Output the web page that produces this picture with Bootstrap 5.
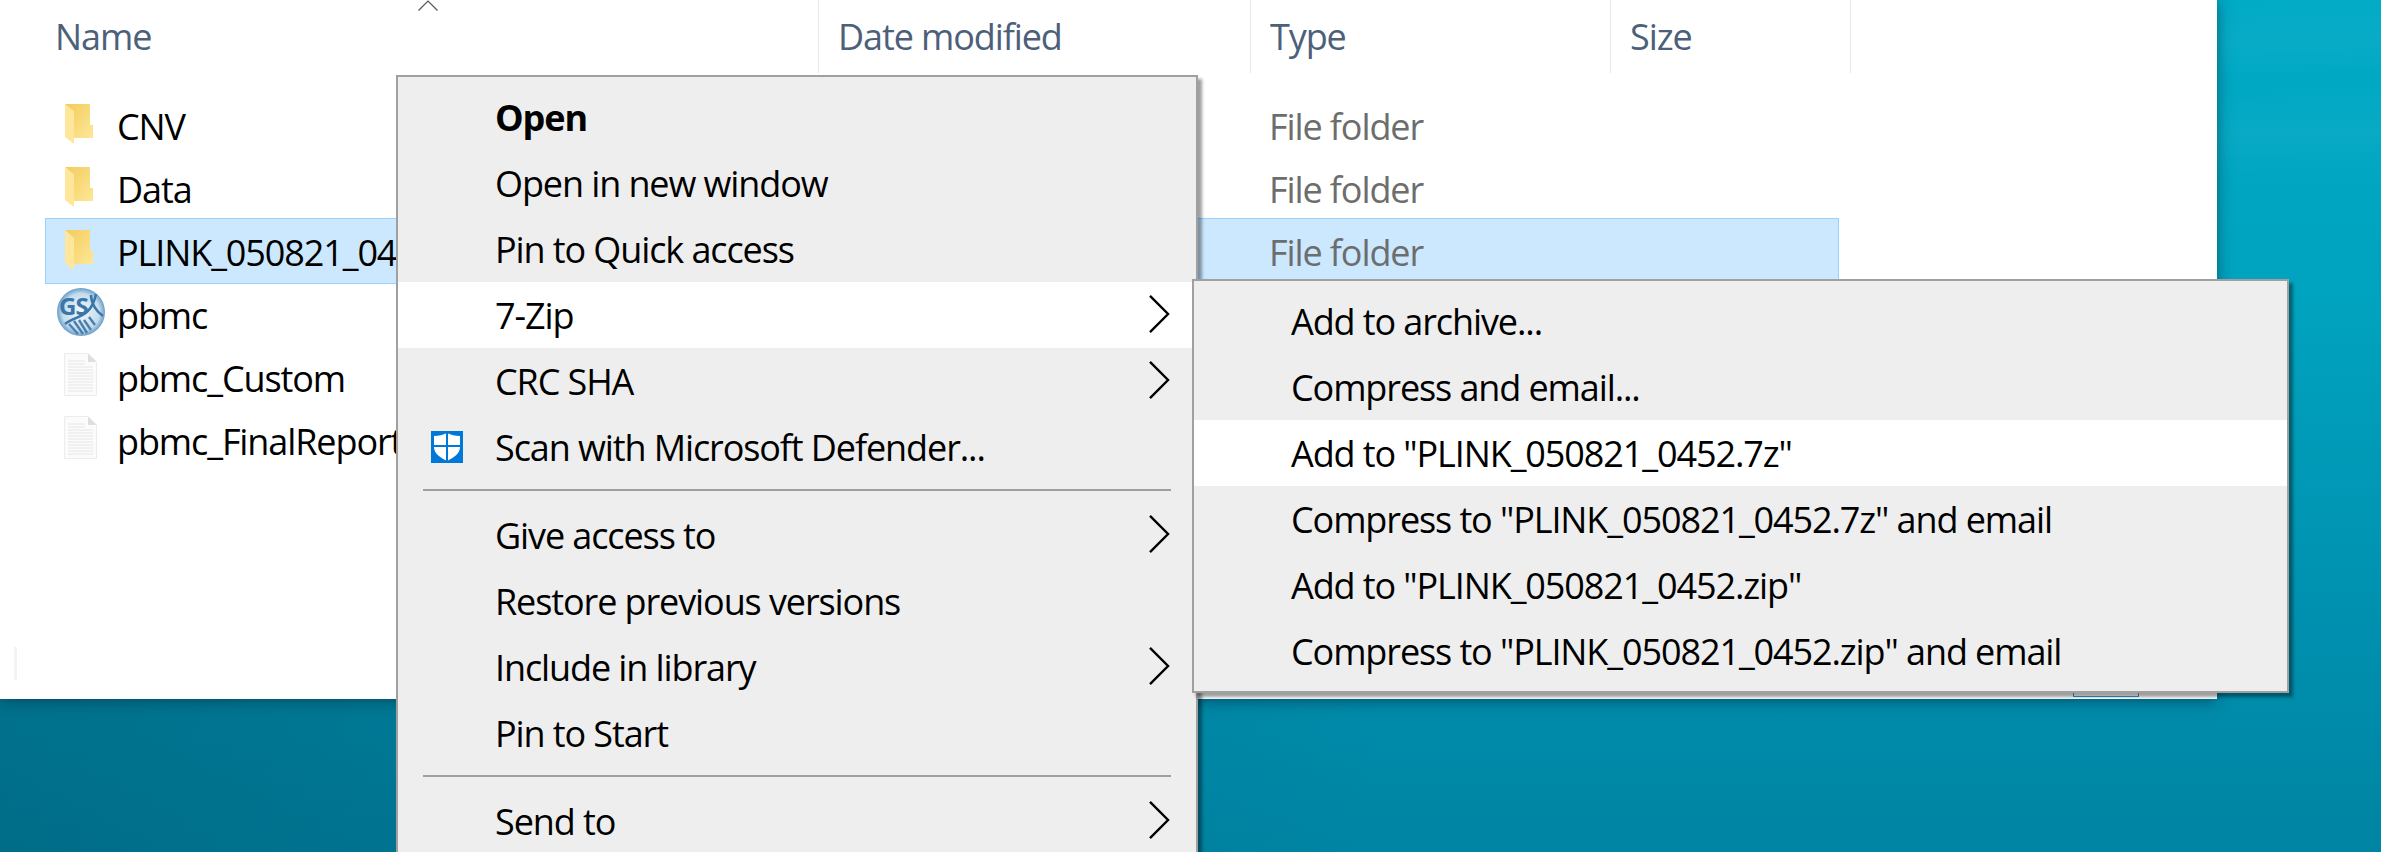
<!DOCTYPE html>
<html lang="en">

<head>
    <meta charset="UTF-8">
    <meta name="viewport" content="width=device-width, initial-scale=1.0">
    <title>Explorer context menu</title>
    <link href="https://cdn.jsdelivr.net/npm/bootstrap@5.3.3/dist/css/bootstrap.min.css" rel="stylesheet">
    <style>
        html, body {
            height: 852px;
            overflow: hidden;
        }

        body {
            position: relative;
            font-family: "Open Sans", "Liberation Sans", sans-serif;
            font-size: 36px;
            letter-spacing: -1.1px;
            color: #000;
            background:
                linear-gradient(178deg, rgba(255, 255, 255, 0) 0, rgba(255, 255, 255, .04) 40px, rgba(255, 255, 255, 0) 75px, rgba(255, 255, 255, .03) 120px, rgba(255, 255, 255, 0) 160px, rgba(255, 255, 255, .03) 215px, rgba(255, 255, 255, 0) 260px) no-repeat,
                linear-gradient(100deg, rgba(0, 50, 70, .32) 0%, rgba(0, 50, 70, 0) 60%),
                linear-gradient(180deg, #00aac6 0%, #00a3bf 35%, #008fae 75%, #0084a3 100%);
        }

        .explorer {
            position: absolute;
            left: 0;
            top: 0;
            width: 2217px;
            height: 699px;
            background: #fff;
            box-shadow: 0 2px 14px rgba(0, 40, 60, .55);
        }

        .col-head {
            height: 73px;
            padding-left: 19px;
            padding-bottom: 2px;
            border-right: 1px solid #e8e8e8;
            color: #4c607a;
            line-height: 73px;
        }

        .col-name { width: 819px; padding-left: 55px; }
        .col-date { width: 432px; }
        .col-type { width: 360px; }
        .col-size { width: 240px; }

        .sort-caret {
            position: absolute;
            left: 418px;
            top: 0;
        }

        .file-list {
            margin-top: 19px;
            margin-left: 45px;
            width: 1794px;
        }

        .file-row {
            height: 66px;
            margin-bottom: -3px;
            border: 1px solid transparent;
        }

        .file-row.picked {
            background: #cce8ff;
            border-color: #99d1ff;
        }

        .file-icon {
            flex: none;
            margin: 6px 12px 0 11px;
        }

        .file-name {
            width: 1152px;
            line-height: 66px;
            padding-top: 1px;
            white-space: nowrap;
            overflow: hidden;
        }

        .file-type {
            line-height: 66px;
            padding-top: 1px;
            color: #6d6d6d;
        }

        .scroll-mark {
            position: absolute;
            left: 14px;
            top: 647px;
            width: 3px;
            height: 33px;
            background: #f3f3f3;
        }

        .view-btn {
            position: absolute;
            left: 2073px;
            top: 660px;
            width: 66px;
            height: 37px;
            border: 1px solid #3a96dd;
        }

        .ctx-menu {
            --bs-dropdown-font-size: 36px;
            position: absolute;
            display: block;
            margin: 0;
            padding: 7px 0;
            background: #eeeeee;
            border: 2px solid #a0a0a0;
            border-radius: 0;
            box-shadow: 4px 4px 3px rgba(0, 0, 0, .38);
            letter-spacing: -1.1px;
        }

        .ctx-main {
            left: 396px;
            top: 75px;
            width: 802px;
        }

        .ctx-sub {
            left: 1192px;
            top: 279px;
            width: 1097px;
            height: 414px;
        }

        .ctx-item {
            height: 66px;
            padding: 0;
            line-height: 67px;
            color: #000;
            background: transparent;
        }

        .ctx-main .ctx-item { padding-left: 97px; }
        .ctx-sub .ctx-item { padding-left: 97px; }

        .ctx-item.lit { background: #fff; }

        .ctx-item.strong {
            font-weight: 700;
        }

        .ctx-rule {
            height: 2px;
            margin: 9px 25px 11px 25px;
            background: #a0a0a0;
            border: 0;
            opacity: 1;
        }

        .ctx-arrow {
            position: absolute;
            right: 26px;
            margin-top: 13px;
        }

        .ctx-shield {
            position: absolute;
            left: 33px;
            margin-top: 17px;
        }
    </style>
</head>

<body>
    <svg width="0" height="0" class="position-absolute">
        <defs>
            <linearGradient id="folderBack" x1="0" y1="0" x2="1" y2="1">
                <stop offset="0" stop-color="#f3cc5c" />
                <stop offset="1" stop-color="#fde797" />
            </linearGradient>
            <radialGradient id="gsBall" cx="0.5" cy="0.5" r="0.55">
                <stop offset="0" stop-color="#f2f7fb" />
                <stop offset="0.7" stop-color="#c5dcec" />
                <stop offset="1" stop-color="#3f82b8" />
            </radialGradient>
            <symbol id="folder" viewBox="0 0 48 48">
                <path d="M8 5H33V26H36V39H17V13Z" fill="url(#folderBack)" />
                <path d="M8 5L17 13V45L8 38Z" fill="#fee69a" />
            </symbol>
            <symbol id="doc" viewBox="0 0 48 48">
                <path d="M7.5 2.500H31L39.500 11V44.500H7.500Z" fill="#fbfbfb" stroke="#ececec" />
                <path d="M31 2.500V11H39.500Z" fill="#dedede" />
                <path d="M11 10H28M11 13H28M11 16H36M11 19H36M11 22H36M11 25H36M11 28H36M11 31H36M11 34H36M11 37H36M11 40H36" stroke="#e6e6e6" />
            </symbol>
            <symbol id="chevron" viewBox="0 0 22 40">
                <path d="M1 1L20 20L1 39" fill="none" stroke="#000" stroke-width="2.500" />
            </symbol>
        </defs>
    </svg>

    <div class="explorer">
        <div class="d-flex">
            <div class="col-head col-name">Name</div>
            <div class="col-head col-date">Date modified</div>
            <div class="col-head col-type">Type</div>
            <div class="col-head col-size">Size</div>
        </div>
        <svg class="sort-caret" width="20" height="11" viewBox="0 0 20 11">
            <path d="M0.500 10.500L10 1L19.500 10.500" fill="none" stroke="#555" stroke-width="1.200" />
        </svg>

        <div class="file-list">
            <div class="file-row d-flex">
                <svg class="file-icon" width="48" height="48"><use href="#folder" /></svg>
                <div class="file-name">CNV</div>
                <div class="file-type">File folder</div>
            </div>
            <div class="file-row d-flex">
                <svg class="file-icon" width="48" height="48"><use href="#folder" /></svg>
                <div class="file-name">Data</div>
                <div class="file-type">File folder</div>
            </div>
            <div class="file-row picked d-flex">
                <svg class="file-icon" width="48" height="48"><use href="#folder" /></svg>
                <div class="file-name">PLINK_050821_0452</div>
                <div class="file-type">File folder</div>
            </div>
            <div class="file-row d-flex">
                <svg class="file-icon" width="48" height="48" viewBox="0 0 48 48">
                    <circle cx="24" cy="24" r="24" fill="url(#gsBall)" />
                    <text x="2" y="27" font-family="Open Sans, sans-serif" font-weight="700" font-size="24" letter-spacing="-1" fill="#3b76ab">GS</text>
                    <path d="M8 36C20 27 34 30 39 6M34 7C34 16 40 24 46 28" fill="none" stroke="#3b76ab" stroke-width="2.500" />
                    <path d="M12 36L21 46M17 33L26 46M22 32L30 45M27 32L34 42M32 29L38 37" stroke="#4a7fae" stroke-width="2.400" />
                </svg>
                <div class="file-name">pbmc</div>
            </div>
            <div class="file-row d-flex">
                <svg class="file-icon" width="48" height="48"><use href="#doc" /></svg>
                <div class="file-name">pbmc_Custom</div>
            </div>
            <div class="file-row d-flex">
                <svg class="file-icon" width="48" height="48"><use href="#doc" /></svg>
                <div class="file-name">pbmc_FinalReport</div>
            </div>
        </div>

        <div class="scroll-mark"></div>
        <div class="view-btn"></div>
    </div>

    <div class="dropdown-menu ctx-menu ctx-main">
        <div class="dropdown-item ctx-item strong">Open</div>
        <div class="dropdown-item ctx-item">Open in new window</div>
        <div class="dropdown-item ctx-item">Pin to Quick access</div>
        <div class="dropdown-item ctx-item lit">
            <svg class="ctx-arrow" width="21" height="38"><use href="#chevron" /></svg>7-Zip
        </div>
        <div class="dropdown-item ctx-item">
            <svg class="ctx-arrow" width="21" height="38"><use href="#chevron" /></svg>CRC SHA
        </div>
        <div class="dropdown-item ctx-item">
            <svg class="ctx-shield" width="32" height="32" viewBox="0 0 32 32">
                <rect width="32" height="32" fill="#0078d7" />
                <path d="M3 5C8 5 12 4 16 2C20 4 24 5 29 5V16C29 23 22 27 16 30C10 27 3 23 3 16Z" fill="#fff" />
                <path d="M16 2V30M3 15H29" stroke="#0078d7" stroke-width="2" />
            </svg>Scan with Microsoft Defender...
        </div>
        <hr class="ctx-rule">
        <div class="dropdown-item ctx-item">
            <svg class="ctx-arrow" width="21" height="38"><use href="#chevron" /></svg>Give access to
        </div>
        <div class="dropdown-item ctx-item">Restore previous versions</div>
        <div class="dropdown-item ctx-item">
            <svg class="ctx-arrow" width="21" height="38"><use href="#chevron" /></svg>Include in library
        </div>
        <div class="dropdown-item ctx-item">Pin to Start</div>
        <hr class="ctx-rule">
        <div class="dropdown-item ctx-item">
            <svg class="ctx-arrow" width="21" height="38"><use href="#chevron" /></svg>Send to
        </div>
    </div>

    <div class="dropdown-menu ctx-menu ctx-sub">
        <div class="dropdown-item ctx-item">Add to archive...</div>
        <div class="dropdown-item ctx-item">Compress and email...</div>
        <div class="dropdown-item ctx-item lit">Add to "PLINK_050821_0452.7z"</div>
        <div class="dropdown-item ctx-item">Compress to "PLINK_050821_0452.7z" and email</div>
        <div class="dropdown-item ctx-item">Add to "PLINK_050821_0452.zip"</div>
        <div class="dropdown-item ctx-item">Compress to "PLINK_050821_0452.zip" and email</div>
    </div>

    <script src="https://cdn.jsdelivr.net/npm/bootstrap@5.3.3/dist/js/bootstrap.bundle.min.js"></script>
</body>

</html>
